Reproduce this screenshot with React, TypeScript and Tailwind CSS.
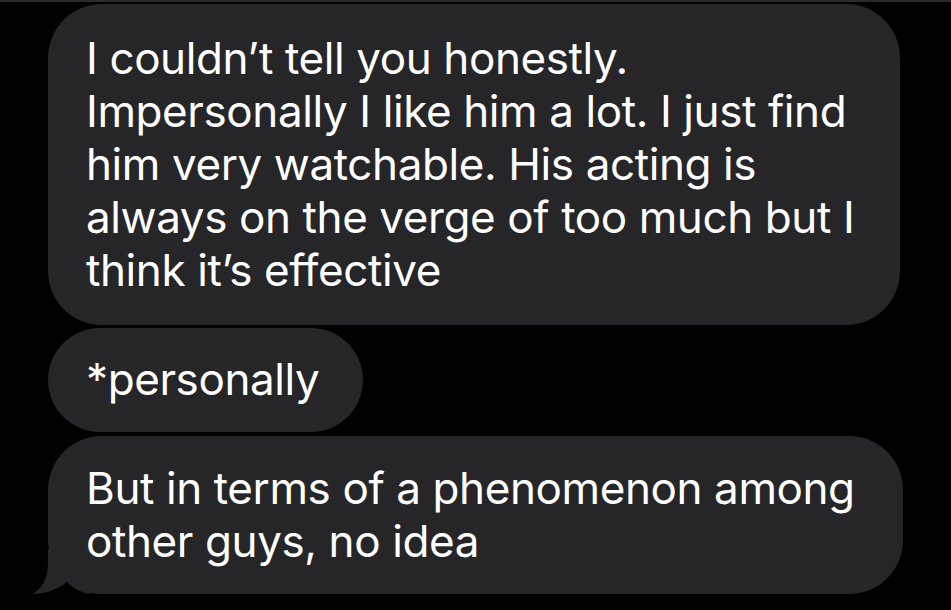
import React from 'react';

const Tail = () => (
  <svg
    className="absolute left-[-18px] bottom-0"
    width="60"
    height="45"
    viewBox="0 0 60 45"
  >
    <path
      d="M18 0 L18 12 C18 30 12 40 2 45 C14 45 27 41 37 33 C44 40 52 44 60 45 L60 0 Z"
      fill="#262629"
    />
  </svg>
);

const App = () => {
  return (
    <div
      className="w-[951px] h-[610px] bg-black border-t-2 border-[#2a2a2c] overflow-hidden"
      style={{ fontFamily: 'Inter, "Noto Sans", sans-serif' }}
    >
      <div className="flex flex-col items-start pl-[48px] pt-[2px] text-white text-[44px] leading-[53px] tracking-[-0.4px]">
        {/* First message */}
        <div className="w-[852px] h-[321px] bg-[#262629] rounded-[54px] pl-[38px] pt-[28px] whitespace-nowrap">
          I couldn’t tell you honestly.
          <br />
          Impersonally I like him a lot. I just find
          <br />
          him very watchable. His acting is
          <br />
          always on the verge of too much but I
          <br />
          think it’s effective
        </div>

        {/* Correction */}
        <div className="mt-[3px] w-[315px] h-[104px] bg-[#262629] rounded-[52px] pl-[38px] pt-[25px] whitespace-nowrap">
          *personally
        </div>

        {/* Last message with tail */}
        <div className="relative mt-[4px] w-[855px] h-[158px] bg-[#262629] rounded-[54px] pl-[38px] pt-[26px] whitespace-nowrap">
          <Tail />
          <span className="relative">
            But in terms of a phenomenon among
            <br />
            other guys, no idea
          </span>
        </div>
      </div>
    </div>
  );
};

export default App;
